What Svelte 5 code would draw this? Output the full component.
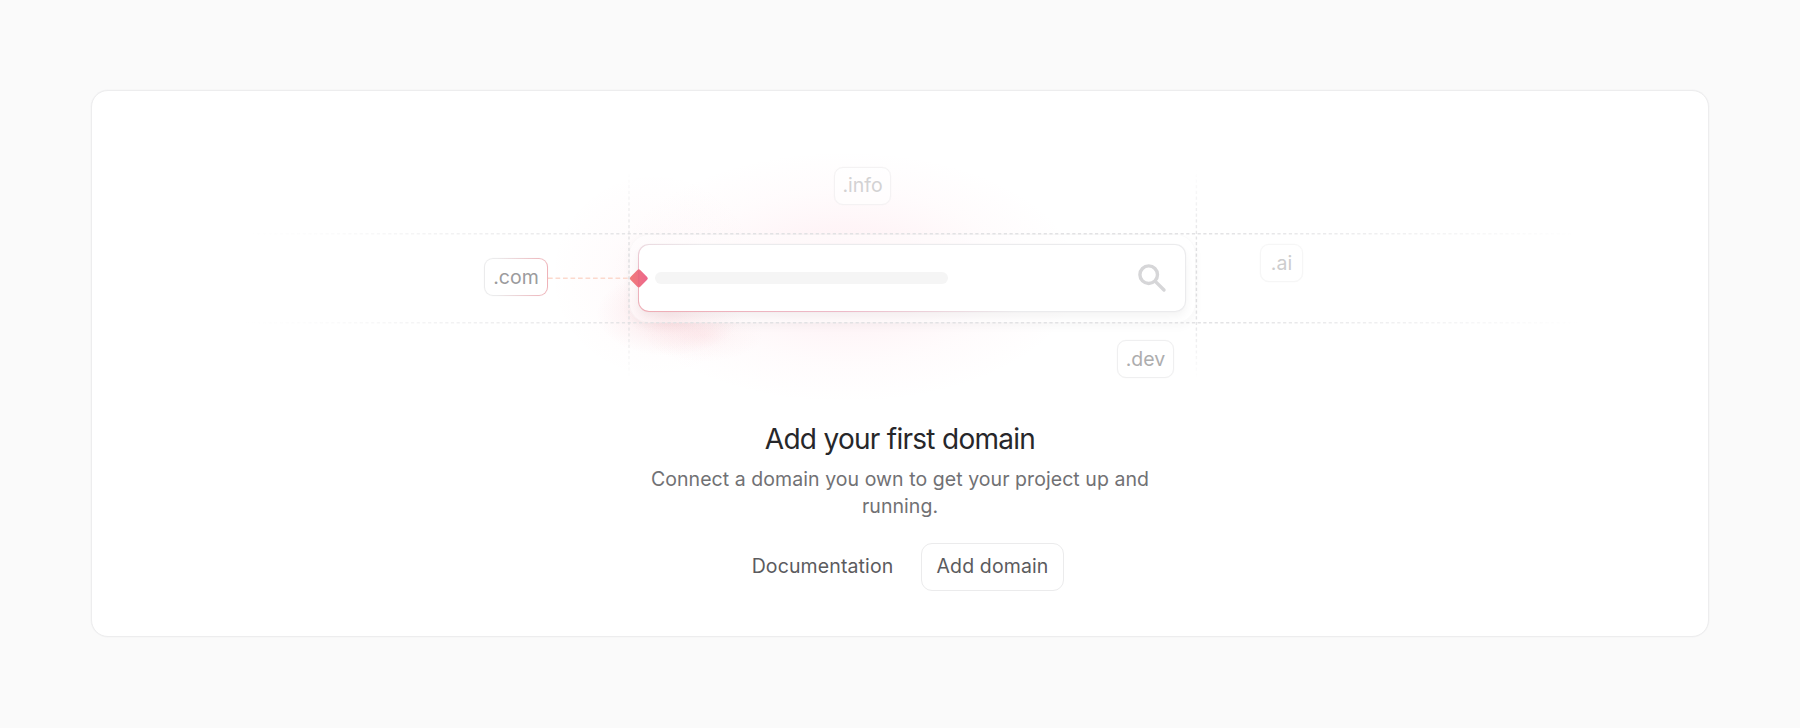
<script>
  const chips = [
    { label: '.com', x: 484, y: 258, w: 64, tone: 'active' },
    { label: '.info', x: 834, y: 167, w: 57, tone: 'faint' },
    { label: '.ai', x: 1260, y: 244, w: 43, tone: 'light' },
    { label: '.dev', x: 1117, y: 340, w: 57, tone: 'mid' }
  ];
</script>

<main class="page">
  <section class="card">
    <div class="art">
      <svg class="layer" width="1616" height="309" viewBox="92 91 1616 309" aria-hidden="true">
        <defs>
          <radialGradient id="halo">
            <stop offset="0" stop-color="#fb5f8c" stop-opacity=".105" />
            <stop offset=".4" stop-color="#fb6f93" stop-opacity=".07" />
            <stop offset=".7" stop-color="#f98ca6" stop-opacity=".03" />
            <stop offset="1" stop-color="#f98ca6" stop-opacity="0" />
          </radialGradient>
          <radialGradient id="side">
            <stop offset="0" stop-color="#f0607a" stop-opacity=".05" />
            <stop offset=".5" stop-color="#f0607a" stop-opacity=".018" />
            <stop offset="1" stop-color="#f0607a" stop-opacity="0" />
          </radialGradient>
          <radialGradient id="ember">
            <stop offset="0" stop-color="#ea5566" stop-opacity=".17" />
            <stop offset=".5" stop-color="#ea5566" stop-opacity=".065" />
            <stop offset="1" stop-color="#ea5566" stop-opacity="0" />
          </radialGradient>
          <linearGradient id="row" gradientUnits="userSpaceOnUse" x1="240" x2="1580" y1="0" y2="0">
            <stop offset="0" stop-color="#e2e2e4" stop-opacity="0" />
            <stop offset=".06" stop-color="#e2e2e4" stop-opacity=".12" />
            <stop offset=".32" stop-color="#e2e2e4" />
            <stop offset=".72" stop-color="#e2e2e4" />
            <stop offset=".97" stop-color="#e2e2e4" stop-opacity=".12" />
            <stop offset="1" stop-color="#e2e2e4" stop-opacity="0" />
          </linearGradient>
          <linearGradient id="col" gradientUnits="userSpaceOnUse" x1="0" x2="0" y1="170" y2="378">
            <stop offset="0" stop-color="#dedee0" stop-opacity="0" />
            <stop offset=".4" stop-color="#dedee0" />
            <stop offset=".65" stop-color="#dedee0" />
            <stop offset="1" stop-color="#dedee0" stop-opacity="0" />
          </linearGradient>
        </defs>
        <ellipse cx="845" cy="277" rx="236" ry="126" fill="url(#halo)" />
        <ellipse cx="655" cy="275" rx="106" ry="104" fill="url(#side)" />
        <ellipse cx="668" cy="314" rx="72" ry="42" fill="url(#ember)" />
        <ellipse cx="704" cy="335" rx="60" ry="27" fill="url(#ember)" opacity=".4" />
      </svg>

      <div class="frame">
        <div class="field">
          <span class="placeholder"></span>
          <svg class="search" width="30" height="30" viewBox="0 0 30 30" fill="none" stroke="#d6d6d8" stroke-width="3.4" stroke-linecap="round" aria-hidden="true">
            <circle cx="11.7" cy="11.7" r="8.8" />
            <path d="M18.3 18.4 27 27" />
          </svg>
        </div>
      </div>

      <svg class="layer" width="1616" height="309" viewBox="92 91 1616 309" fill="none" aria-hidden="true">
        <g stroke-width="1.4" stroke-dasharray="3.2 2.5">
          <path stroke="url(#row)" d="M240 233.7H1580v.01M240 322.7H1580v.01" />
          <path stroke="url(#col)" d="M629 168V382h.01M1196.4 168V382h.01" />
        </g>
        <path stroke="#fcd9cd" stroke-width="1.4" stroke-dasharray="4.7 2.8" d="M548 278.3H630" />
        <defs>
          <linearGradient id="gem" x1="0" y1="1" x2="1" y2="0">
            <stop offset="0" stop-color="#f17c78" />
            <stop offset="1" stop-color="#ec668e" />
          </linearGradient>
        </defs>
        <rect x="631.9" y="271.5" width="13.8" height="13.8" rx="2" transform="rotate(45 638.8 278.4)" fill="url(#gem)" />
        <path stroke="#db5f79" stroke-opacity=".45" stroke-width="1" d="M638.8 271V286" />
      </svg>

      {#each chips as chip}
        <span class="chip {chip.tone}" style="left:{chip.x - 92}px;top:{chip.y - 91}px;width:{chip.w}px">{chip.label}</span>
      {/each}
    </div>

    <div class="copy">
      <h1>Add your first domain</h1>
      <p>Connect a domain you own to get your project up and running.</p>
      <div class="actions">
        <button class="plain">Documentation</button>
        <button class="outlined">Add domain</button>
      </div>
    </div>
  </section>
</main>

<style>
  :global(body) {
    margin: 0;
    background: #fafafa;
  }
  .page {
    box-sizing: border-box;
    width: 1800px;
    height: 728px;
    padding: 90px 91px;
    font-family: Inter, sans-serif;
    background: #fafafa;
  }
  .card {
    box-sizing: border-box;
    height: 547px;
    border: 1px solid #ededee;
    border-radius: 17px;
    background: #fff;
    box-shadow: 0 0 0 0.5px #f3f3f4;
    overflow: hidden;
  }
  .art {
    position: relative;
    height: 309px;
  }
  .layer {
    position: absolute;
    inset: 0;
  }
  .frame {
    position: absolute;
    left: 537px;
    top: 143px;
    box-sizing: border-box;
    width: 567px;
    height: 89px;
    padding: 10px 10px 10px 9px;
    border-radius: 20px;
    background: rgba(255, 255, 255, 0.42);
    box-shadow: 0 4px 10px rgba(0, 0, 0, 0.03), inset 0 0 0 1px rgba(0, 0, 0, 0.018);
  }
  .field {
    display: flex;
    align-items: center;
    justify-content: space-between;
    box-sizing: border-box;
    height: 68px;
    padding: 0 18px 0 16px;
    border: 1px solid transparent;
    border-radius: 11px;
    background:
      linear-gradient(#fff, #fff) padding-box,
      linear-gradient(12deg, #eeacb4 0%, #edbac8 24%, #ebebed 44%) border-box;
    box-shadow: 0 5px 9px rgba(0, 0, 0, 0.045), 0 0 0 0.5px rgba(0, 0, 0, 0.015);
  }
  .placeholder {
    width: 293px;
    height: 12px;
    border-radius: 6px;
    background: #f5f5f5;
  }
  .chip {
    position: absolute;
    box-sizing: border-box;
    height: 38px;
    border: 1px solid #efeff0;
    border-radius: 9px;
    background: #fff;
    box-shadow: 0 0 0 0.5px rgba(0, 0, 0, 0.02);
    font-size: 19.5px;
    line-height: 36px;
    text-align: center;
  }
  .active {
    border-color: transparent;
    background:
      linear-gradient(#fff, #fff) padding-box,
      linear-gradient(90deg, #ebebec 20%, #efb2b8 100%) border-box;
    color: #9b9b9d;
  }
  .faint {
    border-color: #f4f2f3;
    background: rgba(255, 255, 255, 0.6);
    color: #d3d2d3;
    line-height: 35px;
  }
  .light {
    border-color: #f6f6f6;
    color: #cdcdce;
  }
  .mid {
    color: #adadae;
  }
  .copy {
    display: flex;
    flex-direction: column;
    align-items: center;
    padding-top: 22px;
  }
  h1 {
    margin: 0;
    color: #27272a;
    font-size: 28px;
    font-weight: 400;
    line-height: 34px;
    letter-spacing: -0.72px;
  }
  p {
    width: 520px;
    margin: 10px 0 0;
    color: #717174;
    font-size: 19.5px;
    line-height: 27px;
    letter-spacing: 0.06px;
    text-align: center;
  }
  .actions {
    display: flex;
    gap: 13px;
    margin: 23px 0 0 1px;
  }
  button {
    box-sizing: border-box;
    height: 48px;
    padding: 0 0 2px;
    border: 1px solid transparent;
    border-radius: 11px;
    background: none;
    color: #5b5b5e;
    font: 400 19.5px/44px Inter, sans-serif;
    letter-spacing: 0.12px;
  }
  .plain {
    width: 171px;
  }
  .outlined {
    width: 143px;
    border-color: #ebebec;
    background: #fff;
  }
</style>
